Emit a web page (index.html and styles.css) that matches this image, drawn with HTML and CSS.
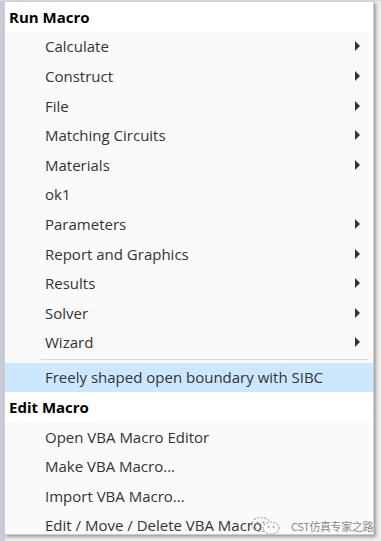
FILE: index.html
```html
<!DOCTYPE html>
<html>
<head>
<meta charset="utf-8">
<link rel="stylesheet" href="styles.css">
</head>
<body>
<div class="backdrop">
  <div class="menu">
    <div class="header">Run Macro</div>
    <div class="item sub">Calculate<span class="arrow"></span></div>
    <div class="item sub">Construct<span class="arrow"></span></div>
    <div class="item sub">File<span class="arrow"></span></div>
    <div class="item sub">Matching Circuits<span class="arrow"></span></div>
    <div class="item sub">Materials<span class="arrow"></span></div>
    <div class="item">ok1</div>
    <div class="item sub">Parameters<span class="arrow"></span></div>
    <div class="item sub">Report and Graphics<span class="arrow"></span></div>
    <div class="item sub">Results<span class="arrow"></span></div>
    <div class="item sub">Solver<span class="arrow"></span></div>
    <div class="item sub">Wizard<span class="arrow"></span></div>
    <div class="separator"></div>
    <div class="item hover">Freely shaped open boundary with SIBC</div>
    <div class="header">Edit Macro</div>
    <div class="item">Open VBA Macro Editor</div>
    <div class="item">Make VBA Macro...</div>
    <div class="item">Import VBA Macro...</div>
    <div class="item">Edit / Move / Delete VBA Macro...</div>
  </div>
  <div class="watermark">
    <svg class="wx" width="34" height="20" viewBox="0 0 34 20">
      <ellipse cx="12" cy="8.5" rx="9.5" ry="7" fill="none" stroke="#aaa" stroke-width="1.2" stroke-dasharray="2 1.5"/>
      <ellipse cx="22" cy="12" rx="8" ry="6" fill="#fafafa" stroke="#aaa" stroke-width="1.2" stroke-dasharray="2 1.5"/>
      <circle cx="8.5" cy="6.5" r="1" fill="#999"/>
      <circle cx="14.5" cy="6.5" r="1" fill="#999"/>
      <circle cx="19.5" cy="11" r="0.9" fill="#999"/>
      <circle cx="24.5" cy="11" r="0.9" fill="#999"/>
    </svg>
    <span class="wtext">CST仿真专家之路</span>
  </div>
</div>
</body>
</html>
```
FILE: styles.css
```css
html, body {
  margin: 0;
  padding: 0;
}
body {
  width: 381px;
  height: 541px;
  overflow: hidden;
  background: #e6e7eb;
  font-family: "Open Sans", "Noto Sans", sans-serif;
}
.backdrop {
  position: relative;
  width: 381px;
  height: 541px;
  background: linear-gradient(to right, #c9ccd6 0, #c9ccd6 5px, #eeeeee 5px);
  border-top: 1px solid #dadada;
  box-sizing: border-box;
  padding-left: 4px;
}
.menu {
  width: 370px;
  height: 534px;
  overflow: hidden;
  background: #fafafa;
  border: 1px solid #cfcfcf;
  box-sizing: border-box;
  box-shadow: 2px 2px 3px rgba(0,0,0,0.35);
  display: flex;
  flex-direction: column;
}
.header, .item {
  flex: 0 0 29.6px;
  height: 29.6px;
  display: flex;
  align-items: center;
  font-size: 15px;
  letter-spacing: 0;
  white-space: nowrap;
}
.header {
  background: #ffffff;
  font-weight: 700;
  color: #000;
  padding-left: 4px;
}
.item {
  position: relative;
  color: #333333;
  padding-left: 40px;
}
.item.hover {
  background: #cce8ff;
}
.arrow {
  position: absolute;
  right: 13px;
  top: 50%;
  margin-top: -5px;
  width: 0;
  height: 0;
  border-top: 5px solid transparent;
  border-bottom: 5px solid transparent;
  border-left: 5px solid #333;
}
.separator {
  flex: 0 0 5.4px;
  display: flex;
  align-items: center;
  padding-left: 36px;
  padding-right: 4px;
}
.separator::after {
  content: "";
  flex: 1;
  height: 1px;
  background: #d7d7d7;
}
.watermark {
  position: absolute;
  left: 249px;
  top: 515px;
  display: flex;
  align-items: center;
  gap: 8px;
  white-space: nowrap;
}
.wx {
  flex: 0 0 auto;
}
.wtext {
  flex: 0 0 auto;
  font-family: "Noto Sans CJK SC", "Noto Sans", sans-serif;
  font-size: 11px;
  color: #8a8a8a;
  letter-spacing: -0.4px;
  background: rgba(250,250,250,0.7);
}
```
